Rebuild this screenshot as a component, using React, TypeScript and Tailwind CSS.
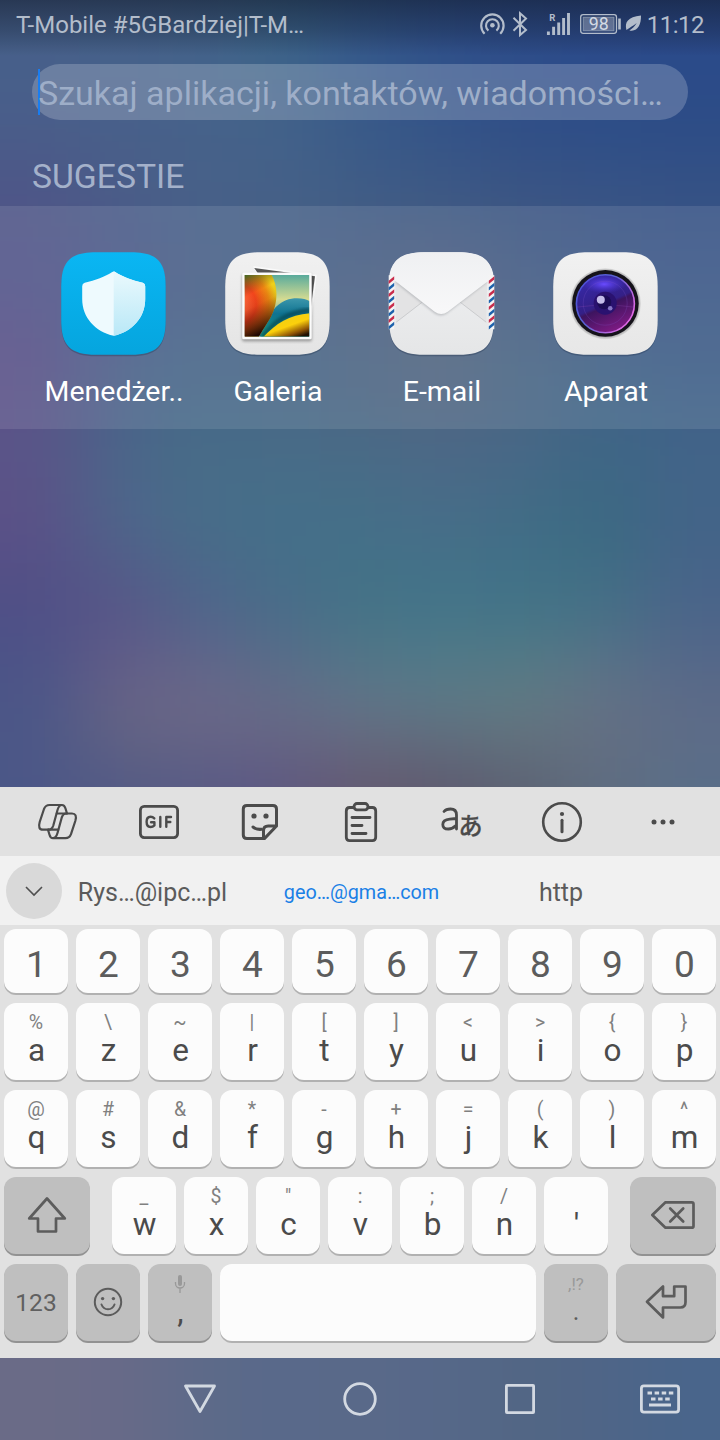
import type { ReactNode } from "react";

const WALL_ROWS: { y: number; h: number; c: string[] }[] = [
  { y: 0, h: 80, c: ["#46608a", "#45618a", "#43628a", "#3b6489", "#34588a", "#2f508a", "#2d4c8a", "#2c4a8b", "#2b4a8b"] },
  { y: 80, h: 80, c: ["#495e8a", "#48608a", "#46628a", "#43628a", "#385a89", "#335388", "#2f4e87", "#2c4d87", "#2c4c86"] },
  { y: 160, h: 80, c: ["#4e5587", "#4a5c88", "#476088", "#456187", "#405c85", "#3e5984", "#3b5583", "#395485", "#365285"] },
  { y: 240, h: 80, c: ["#515488", "#4b5988", "#485f86", "#485f86", "#4a5f84", "#4d5f7f", "#435a84", "#3d5785", "#3a5686"] },
  { y: 320, h: 80, c: ["#584f87", "#4a6089", "#446487", "#476486", "#4b6382", "#52647d", "#486483", "#416086", "#3c5c86"] },
  { y: 400, h: 80, c: ["#5a5588", "#4a6589", "#476c88", "#496b87", "#4a6a86", "#4d6786", "#496786", "#3e6686", "#426488"] },
  { y: 480, h: 80, c: ["#5b5187", "#4e668a", "#476d89", "#446f89", "#446f88", "#476d88", "#416c86", "#3a6981", "#426488"] },
  { y: 560, h: 80, c: ["#504f86", "#575688", "#4e658a", "#486d89", "#437287", "#427488", "#417388", "#437085", "#496489"] },
  { y: 640, h: 56, c: ["#4b5488", "#655d88", "#65658a", "#5b6c89", "#557888", "#547b88", "#577c84", "#5c7488", "#576889"] },
  { y: 696, h: 56, c: ["#4c5787", "#676783", "#6d6986", "#6b6b86", "#677187", "#627684", "#667982", "#686f82", "#5f6c87"] },
  { y: 752, h: 60, c: ["#4b5787", "#545a84", "#575a85", "#5d5782", "#64596f", "#5e596f", "#5b6172", "#5e6d80", "#596e88"] },
  { y: 1330, h: 110, c: ["#6a6b87", "#686a88", "#5d6a89", "#58698a", "#5a6989", "#566889", "#526684", "#4f6587", "#49658b"] },
];

function Wallpaper() {
  return (
    <svg className="absolute inset-0" width="720" height="1440" viewBox="0 0 720 1440" aria-hidden="true">
      <defs>
        <filter id="soft" x="-200" y="-200" width="1120" height="1840" filterUnits="userSpaceOnUse" colorInterpolationFilters="sRGB">
          <feGaussianBlur stdDeviation="38" />
        </filter>
        <linearGradient id="scrim" x1="0" y1="0" x2="0" y2="1">
          <stop offset="0" stopColor="#101828" stopOpacity="0.55" />
          <stop offset="0.55" stopColor="#101828" stopOpacity="0.28" />
          <stop offset="1" stopColor="#101828" stopOpacity="0" />
        </linearGradient>
      </defs>
      <g filter="url(#soft)">
        {WALL_ROWS.map((row, r) =>
          row.c.map((fill, i) => {
            const x = i === 0 ? -160 : i * 80;
            const w = i === 0 || i === 8 ? 241 : 81;
            const y = r === 0 ? -160 : r === 11 ? 1200 : row.y;
            const h = r === 0 ? 241 : r >= 10 ? 400 : row.h + 1;
            return <rect key={`${r}-${i}`} x={x} y={y} width={w} height={h} fill={fill} />;
          }),
        )}
      </g>
      <rect width="720" height="56" fill="url(#scrim)" />
    </svg>
  );
}

function StatusBar() {
  return (
    <div className="flex h-12 items-center justify-between pr-4 pl-4 text-[24px] leading-none text-[#b3bdcb]">
      <span className="pt-0.5">T-Mobile #5GBardziej|T-M…</span>
      <span className="flex items-center">
        <svg width="166" height="28" viewBox="478 10 166 28" fill="none" stroke="currentColor">
          <circle cx="492.400" cy="25.300" r="2.300" fill="currentColor" stroke="none" />
          <path d="M484.600 33.700a11.200 11.200 0 1 1 15.600 0" strokeWidth="2.200" />
          <path d="M488.400 30.600a6.400 6.400 0 1 1 8 0" strokeWidth="2.100" />
          <path d="M513.500 17.800l12.500 12.200-6 5V13.200l6 5.300-12.500 12.200" strokeWidth="2" />
          <path d="M548.400 35v-3.600M553.600 35v-8.300M558.700 35V22.500M563.600 35V18M568.500 35V13" strokeWidth="2.900" />
          <rect x="580.700" y="14.700" width="35.800" height="18.600" rx="2.500" strokeWidth="1.300" />
          <rect x="583.200" y="17.200" width="30.800" height="13.600" fill="#fff" fillOpacity=".28" strokeWidth="1" strokeOpacity=".55" />
          <path d="M619.500 18.500v11" strokeWidth="2.600" />
          <path d="M626.400 30c-1.800-7.800 1.200-12.800 14.600-14.400.2 9.500-3.600 16.600-11.600 14.800 2.800-1.800 5-4 7.300-7.500-3.500 2.900-6.600 4.200-10.300 7.100z" fill="currentColor" stroke="none" />
          <text x="552.300" y="20.700" fontSize="9.500" fontWeight="700" fill="currentColor" stroke="none" textAnchor="middle">R</text>
          <text x="598.800" y="30.200" fontSize="17.800" fill="#d3dae4" stroke="none" textAnchor="middle">98</text>
        </svg>
        <span className="ml-[3px] pt-0.5 tracking-[-0.02em]">11:12</span>
      </span>
    </div>
  );
}

const tile = "M0 35C0 9 9 0 35 0H69.500C95.500 0 104.500 9 104.500 35V67.500C104.500 93.500 95.500 102.500 69.500 102.500H35C9 102.500 0 93.500 0 67.500Z";

function Tile({ fill, children }: { fill: string; children: ReactNode }) {
  return (
    <svg width="112" height="112" viewBox="-4.200 -4.200 112 112" aria-hidden="true">
      <path d={tile} fill="#1b2a45" fillOpacity=".3" transform="translate(0 1.600)" />
      <path d={tile} fill={fill} />
      {children}
    </svg>
  );
}

function ManagerIcon() {
  return (
    <Tile fill="url(#mBg)">
      <defs>
        <linearGradient id="mBg" x1="0" y1="0" x2="0" y2="1"><stop stopColor="#0ab6f3" /><stop offset="1" stopColor="#05a5de" /></linearGradient>
        <linearGradient id="mR" x1="0" y1="0" x2="0" y2="1"><stop stopColor="#eaf9fd" /><stop offset="1" stopColor="#b9e8f7" /></linearGradient>
      </defs>
      <path d="M51 19.700q1.500-.8 3 0C61 24.500 71 28 81.500 30.500q2.500.6 2.500 3.500V47C84 65 71 79.500 52.500 83.500 34 79.500 21 65 21 47V34q0-2.900 2.500-3.500C34 28 44 24.500 51 19.700z" fill="#eefafe" />
      <path d="M52.500 19.100q.8.100 1.500.6C61 24.500 71 28 81.500 30.500q2.500.6 2.500 3.500V47C84 65 71 79.500 52.500 83.500z" fill="url(#mR)" />
    </Tile>
  );
}

function GalleryIcon() {
  return (
    <Tile fill="url(#gBg)">
      <defs>
        <linearGradient id="gBg" x1="0" y1="0" x2="0" y2="1"><stop stopColor="#f1f1f1" /><stop offset="1" stopColor="#e4e4e4" /></linearGradient>
        <linearGradient id="gSky" x1="0" y1="0" x2="0" y2="1"><stop stopColor="#55a99c" /><stop offset=".4" stopColor="#d5db91" /><stop offset="1" stopColor="#156b88" /></linearGradient>
        <radialGradient id="gRed" cx="10" cy="52" r="42" gradientUnits="userSpaceOnUse"><stop stopColor="#ff7a4c" /><stop offset=".5" stopColor="#f2451c" /><stop offset=".8" stopColor="#ee8a12" /><stop offset="1" stopColor="#efd11b" /></radialGradient>
        <linearGradient id="gShade" x1="0" y1="0" x2=".25" y2="1"><stop stopColor="#1f6a2b" stopOpacity=".9" /><stop offset=".35" stopColor="#7a3a10" stopOpacity="0" /><stop offset=".55" stopColor="#5a0d05" stopOpacity=".1" /><stop offset="1" stopColor="#1a0303" stopOpacity=".97" /></linearGradient>
        <linearGradient id="gTeal" x1="0" y1="0" x2="0" y2="1"><stop stopColor="#3d97ac" /><stop offset=".4" stopColor="#0f7391" /><stop offset="1" stopColor="#1c9a80" /></linearGradient>
        <linearGradient id="gYel" x1="0" y1="0" x2=".7" y2="1"><stop offset=".1" stopColor="#e8d018" /><stop offset=".6" stopColor="#fbd00c" /><stop offset=".85" stopColor="#8d5206" /><stop offset="1" stopColor="#201002" /></linearGradient>
        <filter id="gBlur"><feGaussianBlur stdDeviation="1.500" /></filter>
        <clipPath id="gClip"><rect x="19.500" y="22.800" width="64.500" height="61.500" /></clipPath>
      </defs>
      <path d="M28 14L91.500 22.500l-6 52L60 84z" fill="#fafafa" />
      <path d="M29 15.800L89.800 24l-4 30L60 60z" fill="#555" />
      <rect x="17" y="22" width="69.500" height="67" rx="1.500" fill="#000" opacity=".35" filter="url(#gBlur)" />
      <rect x="17" y="20.300" width="69.500" height="66.700" rx="1.500" fill="#fbfbfb" />
      <g clipPath="url(#gClip)">
        <rect x="19" y="22" width="66" height="63" fill="url(#gSky)" />
        <path d="M35 85C44 56 56 46 72 46q8 0 12.500 3V85z" fill="url(#gTeal)" />
        <path d="M37 85C50 69 62 60 85 58" stroke="#05343f" strokeWidth="5" fill="none" opacity=".55" filter="url(#gBlur)" />
        <path d="M37 86C50 72 63 62.500 85 61V86z" fill="url(#gYel)" />
        <path d="M19 22h27C53 34 53 50 46 64 41 73 37 78 33.500 85H19z" fill="url(#gRed)" />
        <path d="M19 22h27C53 34 53 50 46 64 41 73 37 78 33.500 85H19z" fill="url(#gShade)" />
      </g>
    </Tile>
  );
}

function Stripes({ x }: { x: number }) {
  return (
    <g>
      <rect x={x} y="23" width="5.500" height="54" fill="#f4f4f4" />
      {[0, 1, 2, 3, 4, 5, 6, 7].map((i) => (
        <path key={i} d={`M${x} ${28.500 + i * 6.500}l5.500-4.500v3.400l-5.500 4.500z`} fill={i % 2 ? "#1d62ac" : "#c92c4b"} />
      ))}
    </g>
  );
}

function MailIcon() {
  return (
    <Tile fill="url(#eBg)">
      <defs>
        <linearGradient id="eBg" x1="0" y1="0" x2="0" y2="1"><stop stopColor="#f0f1f3" /><stop offset="1" stopColor="#e5e6e7" /></linearGradient>
        <linearGradient id="eFlap" x1="0" y1="0" x2="0" y2="1"><stop stopColor="#eff0f2" /><stop offset="1" stopColor="#f8f8f9" /></linearGradient>
        <filter id="eS" x="-10%" y="-10%" width="120%" height="130%"><feGaussianBlur stdDeviation="1.200" /></filter>
      </defs>
      <path d="M6 28L33 50 7 70zM98 28L71 50 97 70z" fill="#e3e3e4" />
      <path d="M7 70L33 50M97 70L71 50" stroke="#cbccce" strokeWidth="1" />
      <path d="M5 28.500L45 60q6.500 4.500 13 0L99 28.500z" fill="#9a9da2" opacity=".5" filter="url(#eS)" transform="translate(0 1)" />
      <path d="M0 27V25Q2 0 35 0H69.500Q102 0 104.500 25V27Q101 27 96 31L58.500 59.500q-6.500 4.500-13 0L9 31Q5 27 0 27z" fill="url(#eFlap)" />
      <Stripes x={-0.5} />
      <Stripes x={99.6} />
    </Tile>
  );
}

function CameraIcon() {
  return (
    <Tile fill="url(#cBg)">
      <defs>
        <linearGradient id="cBg" x1="0" y1="0" x2="0" y2="1"><stop stopColor="#f1f1f1" /><stop offset="1" stopColor="#e7e7e7" /></linearGradient>
        <linearGradient id="cL" x1=".25" y1="0" x2=".7" y2="1"><stop stopColor="#3629aa" /><stop offset=".5" stopColor="#342087" /><stop offset=".55" stopColor="#3d145f" /><stop offset="1" stopColor="#831b86" /></linearGradient>
        <linearGradient id="cR" x1="0" y1="0" x2="1" y2=".6"><stop stopColor="#4a4fd8" /><stop offset=".5" stopColor="#5a62d2" /><stop offset="1" stopColor="#df6be4" /></linearGradient>
        <radialGradient id="cGlow"><stop stopColor="#6a4bff" /><stop offset="1" stopColor="#4a35d8" stopOpacity="0" /></radialGradient>
        <radialGradient id="cHalo"><stop offset=".9" stopColor="#999" /><stop offset="1" stopColor="#ddd" /></radialGradient>
      </defs>
      <circle cx="52.200" cy="51.500" r="35.500" fill="url(#cHalo)" />
      <circle cx="52.200" cy="51.200" r="33.300" fill="#15131a" />
      <circle cx="52.200" cy="51.500" r="29" fill="url(#cL)" stroke="url(#cR)" strokeWidth="1.600" />
      <ellipse cx="51" cy="32" rx="22" ry="9" fill="url(#cGlow)" />
      <circle cx="52" cy="51" r="22" fill="none" stroke="#7e55c8" strokeOpacity=".3" strokeWidth=".8" />
      <path d="M23 55q30-4 58 0" stroke="#8644ad" strokeOpacity=".45" strokeWidth=".7" fill="none" />
      <circle cx="52" cy="51" r="11.500" fill="#2a1270" />
      <circle cx="51" cy="50" r="7" fill="#1c0c55" />
      <circle cx="47.600" cy="47.500" r="4" fill="#c5bdea" />
      <circle cx="57" cy="56" r="2.300" fill="#8575c4" />
    </Tile>
  );
}

const APPS: { name: string; icon: ReactNode }[] = [
  { name: "Menedżer..", icon: <ManagerIcon /> },
  { name: "Galeria", icon: <GalleryIcon /> },
  { name: "E-mail", icon: <MailIcon /> },
  { name: "Aparat", icon: <CameraIcon /> },
];

const TOOLS: ReactNode[] = [
  <g strokeWidth="2.200" key="copilot">
    <path d="M62 805H49.500Q45.500 805 44 809L39.700 822Q37.500 829.700 43 829.700H48.500Q52 829.700 53.300 825.500L57.500 810Q59 805 62 805Q64.500 805 65.500 808.500L67 813.500" />
    <path d="M53 838.200H65.500Q69.500 838.200 71 834.200L75.300 821Q77.500 813.500 72 813.500H66.500Q63 813.500 61.700 817.700L57.500 833Q56 838.200 53 838.200Q50.500 838.200 49.500 834.700L48 829.700" />
    <path d="M66.500 813.500H56.800M48.500 829.700H58.200" />
  </g>,
  <g strokeWidth="2.800" key="gif">
    <rect x="140.400" y="806.400" width="37.200" height="31.200" rx="3.800" />
    <path d="M154.300 818.400q-1.600-1.700-3.700-1.700-4 0-4 5.100 0 5.200 4 5.200 2.200 0 3.800-1.600v-3.100h-3.300M160.300 817v9.800M171 817h-4.700v9.800M166.300 822h4" strokeWidth="2.400" />
  </g>,
  <g strokeWidth="3" key="sticker">
    <path d="M276.500 826V809q0-3.600-3.600-3.600h-26q-3.600 0-3.600 3.600v26q0 3.600 3.600 3.600h17.500L276.500 826h-8.300q-4.700 0-4.700 4.700v7.500" />
    <path d="M253 827q3.500 2.800 8.500 2.300" />
    <circle cx="254" cy="816" r="2.600" fill="currentColor" stroke="none" />
    <circle cx="266" cy="816" r="2.600" fill="currentColor" stroke="none" />
  </g>,
  <g strokeWidth="2.800" key="clipboard">
    <path d="M354 807.500h-4.300q-3.400 0-3.400 3.400v26.300q0 3.400 3.400 3.400h22.600q3.400 0 3.400-3.400v-26.300q0-3.400-3.400-3.400H368" />
    <rect x="354" y="803.500" width="14" height="6.300" rx="3" />
    <path d="M352 817.500h18M352 825.500h10M352 833.500h14" />
  </g>,
  <g key="translate">
    <path d="M444 811.500q2-2.500 6.500-2.500 6 0 6 6V829M456.300 818.500l-6.500.6q-7 .7-7 5.300 0 4.600 5.600 4.600 4 0 7.900-3.600" strokeWidth="2.800" />
    <text x="470.500" y="835" textAnchor="middle" fontSize="24.500" fontWeight="500" fontFamily="Noto Sans CJK JP, sans-serif" fill="currentColor" strokeWidth=".2">あ</text>
  </g>,
  <g strokeWidth="2.600" key="info">
    <circle cx="562" cy="822" r="18.800" />
    <path d="M562 820.300v11.500" strokeWidth="3" />
    <circle cx="562" cy="814" r="2.100" fill="currentColor" stroke="none" />
  </g>,
  <g fill="currentColor" stroke="none" key="more">
    <circle cx="654" cy="822" r="2.500" />
    <circle cx="663" cy="822" r="2.500" />
    <circle cx="672" cy="822" r="2.500" />
  </g>,
];
const TOOL_BOXES = ["33 798 48 48", "134 798 48 48", "235 798 48 48", "336 798 48 48", "437 798 48 48", "538 798 48 48", "639 798 48 48"];

const ROW_A: [string, string][] = [["%", "a"], ["\\", "z"], ["~", "e"], ["|", "r"], ["[", "t"], ["]", "y"], ["<", "u"], [">", "i"], ["{", "o"], ["}", "p"]];
const ROW_B: [string, string][] = [["@", "q"], ["#", "s"], ["&", "d"], ["*", "f"], ["-", "g"], ["+", "h"], ["=", "j"], ["(", "k"], [")", "l"], ["^", "m"]];
const ROW_C: [string, string][] = [["_", "w"], ["$", "x"], ['"', "c"], [":", "v"], [";", "b"], ["/", "n"], ["", "'"]];

function LetterKey({ hint, label }: { hint: string; label: string }) {
  return (
    <div className="flex h-[77px] w-16 flex-col items-center rounded-xl bg-[#fcfcfc] pt-2 shadow-[0_2px_0_#b1b1b1]">
      <span className="h-[23px] text-[19.500px] leading-[23px] text-[#808080]">{hint}</span>
      <span className="h-[34px] pl-px text-[31.500px] leading-[34px] text-[#4b4b4b]">{label}</span>
    </div>
  );
}

function GreyKey({ wide, children }: { wide: string; children: ReactNode }) {
  return (
    <div className={`flex h-[77px] flex-col items-center rounded-xl bg-[#bfbfbf] text-[#5c5c5c] shadow-[0_2px_0_#929292] ${wide}`}>
      {children}
    </div>
  );
}

function Keyboard() {
  return (
    <div className="h-[571px] bg-[#e1e1e1]">
      <div className="flex h-[69px] items-center justify-between px-[33px] text-[#4b4b4b]">
        {TOOLS.map((t, i) => (
          <svg key={i} width="48" height="48" viewBox={TOOL_BOXES[i]} fill="none" stroke="currentColor" strokeLinecap="round" strokeLinejoin="round">
            {t}
          </svg>
        ))}
      </div>
      <div className="flex h-[69px] items-center bg-[#f1f1f1] pl-1.5 text-[25px] text-[#5b5b5b]">
        <div className="flex size-14 items-center justify-center rounded-full bg-[#d9d9d9]">
          <svg width="20" height="14" viewBox="0 0 20 14" fill="none" stroke="#4f4f4f" strokeWidth="1.600">
            <path d="M2 3l8 8 8-8" />
          </svg>
        </div>
        <span className="w-[181px] pt-1 text-center">Rys…@ipc…pl</span>
        <span className="w-[237px] pt-[5px] text-center text-[19.800px] text-[#1a80e6]">geo…@gma…com</span>
        <span className="w-[162px] pt-1 text-center">http</span>
      </div>
      <div className="flex flex-col gap-2.5 px-1 pt-1">
        <div className="flex gap-2">
          {"1234567890".split("").map((n) => (
            <div key={n} className="flex h-16 w-16 items-center justify-center rounded-xl bg-[#fcfcfc] pt-[7px] pl-px text-[37px] leading-none text-[#5c5c5c] shadow-[0_2px_0_#b1b1b1]">
              {n}
            </div>
          ))}
        </div>
        <div className="flex gap-2">{ROW_A.map(([h, l]) => <LetterKey key={l} hint={h} label={l} />)}</div>
        <div className="flex gap-2">{ROW_B.map(([h, l]) => <LetterKey key={l} hint={h} label={l} />)}</div>
        <div className="flex justify-between">
          <GreyKey wide="w-[86px]">
            <svg width="86" height="77" viewBox="4 1177 86 77" fill="none" stroke="currentColor" strokeWidth="2.700" strokeLinejoin="round">
              <path d="M47 1198.500l17.800 20H56v13H38v-13h-8.800z" />
            </svg>
          </GreyKey>
          <div className="flex gap-2">{ROW_C.map(([h, l]) => <LetterKey key={l} hint={h} label={l} />)}</div>
          <GreyKey wide="w-[86px]">
            <svg width="86" height="77" viewBox="630 1177 86 77" fill="none" stroke="currentColor" strokeWidth="2.700" strokeLinejoin="round" strokeLinecap="round">
              <path d="M652.300 1215l13.200-12.700h26.200q1.800 0 1.800 1.800v21.800q0 1.800-1.800 1.800h-26.200z" />
              <path d="M670.200 1208.500l13 13M683.200 1208.500l-13 13" />
            </svg>
          </GreyKey>
        </div>
        <div className="flex gap-2">
          <GreyKey wide="w-16">
            <span className="text-[24.500px] leading-[77px] text-[#606060]">123</span>
          </GreyKey>
          <GreyKey wide="w-16">
            <svg width="64" height="77" viewBox="76 1264 64 77" fill="none" stroke="currentColor" strokeWidth="2">
              <circle cx="108" cy="1302" r="13.200" />
              <path d="M101.500 1304.500q1.800 4.800 6.500 4.800t6.500-4.800" strokeLinecap="round" />
              <circle cx="102.600" cy="1298.600" r="1.700" fill="currentColor" stroke="none" />
              <circle cx="113.400" cy="1298.600" r="1.700" fill="currentColor" stroke="none" />
            </svg>
          </GreyKey>
          <GreyKey wide="w-16">
            <svg className="mt-[10px]" width="12" height="20" viewBox="174 1274 12 20" fill="none" stroke="#999" strokeWidth="1.300">
              <rect x="178" y="1275" width="4" height="11" rx="2" fill="#999" stroke="none" />
              <path d="M175.500 1282v1.500a4.500 4.500 0 0 0 9 0V1282M180 1288.500v4.500" />
            </svg>
            <span className="pl-px text-[32px] leading-[34px] text-[#4b4b4b]">,</span>
          </GreyKey>
          <div className="h-[77px] w-[316px] rounded-xl bg-[#fcfcfc] shadow-[0_2px_0_#b1b1b1]" />
          <GreyKey wide="w-16">
            <span className="mt-[9px] h-[23px] text-[17px] leading-[23px] text-[#999]">,!?</span>
            <span className="text-[25px] leading-[32px]">.</span>
          </GreyKey>
          <GreyKey wide="w-[100px]">
            <svg width="100" height="77" viewBox="616 1264 100 77" fill="none" stroke="currentColor" strokeWidth="2.700" strokeLinejoin="round">
              <path d="M647 1301.700l16-15.200v9.700h11.200v-9.700h11.300v15.800q0 5.200-5.200 5.200H663v10z" />
            </svg>
          </GreyKey>
        </div>
      </div>
    </div>
  );
}

function NavBar() {
  return (
    <div className="flex h-[82px] items-center">
      <svg width="720" height="48" viewBox="0 1375 720 48" fill="none" stroke="#d3d9e2" strokeWidth="2.800" strokeLinejoin="round">
        <path d="M185.500 1386h29L200 1411.500z" />
        <circle cx="360" cy="1399" r="15.300" />
        <rect x="506.400" y="1385.400" width="27.200" height="27.200" rx=".6" />
        <rect x="641.400" y="1385.900" width="37.200" height="26.200" rx="2.500" />
        <path d="M647.500 1393h26.500" strokeWidth="3" strokeDasharray="4.500 2.600" />
        <path d="M651 1399h19" strokeWidth="3" strokeDasharray="4.500 2.600" />
        <path d="M649 1405h22" strokeWidth="3" />
      </svg>
    </div>
  );
}

export default function App() {
  return (
    <div className="relative h-[1440px] w-[720px] overflow-hidden bg-[#49658a] font-['Roboto','Noto_Sans',sans-serif]">
      <Wallpaper />
      <div className="relative flex h-full flex-col">
        <StatusBar />
        <div className="mx-8 mt-4 flex h-14 items-center rounded-full bg-white/20 pl-1.5">
          <span className="h-[46px] w-0.5 shrink-0 bg-[#1a7df0]" />
          <span className="-ml-0.5 pt-0.5 text-[34px] leading-none whitespace-nowrap text-[#9eaec8]">
            Szukaj aplikacji, kontaktów, wiadomości…
          </span>
        </div>
        <h2 className="h-[86px] pl-8 text-[33.700px] leading-[113px] text-[#a4b1ca]">SUGESTIE</h2>
        <div className="flex h-[223px] bg-white/10 pt-[42px] pl-[31px]">
          {APPS.map((a) => (
            <div key={a.name} className="flex w-[164px] flex-col items-center">
              {a.icon}
              <span className="pt-4 pl-0.5 text-[28.500px] leading-8 text-white">{a.name}</span>
            </div>
          ))}
        </div>
        <div className="flex-1" />
        <Keyboard />
        <NavBar />
      </div>
    </div>
  );
}
